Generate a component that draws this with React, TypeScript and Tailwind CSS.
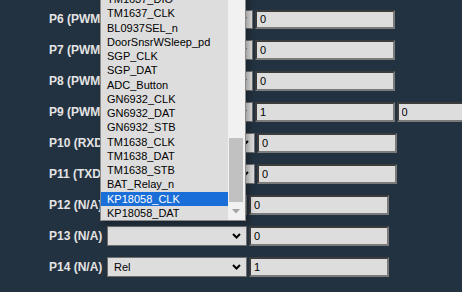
const rows = [
  { label: 'P6 (PWM0)', lw: 'w-[64px]', sel: '', vals: ['0'] },
  { label: 'P7 (PWM1)', lw: 'w-[64px]', sel: '', vals: ['0'] },
  { label: 'P8 (PWM2)', lw: 'w-[64px]', sel: '', vals: ['0'] },
  { label: 'P9 (PWM3)', lw: 'w-[64px]', sel: '', vals: ['1', '0'] },
  { label: 'P10 (RXD1)', lw: 'w-[66px]', sel: '', vals: ['0'] },
  { label: 'P11 (TXD1)', lw: 'w-[66px]', sel: '', vals: ['0'] },
  { label: 'P12 (N/A)', lw: 'w-[58px]', sel: '', vals: ['0'] },
  { label: 'P13 (N/A)', lw: 'w-[58px]', sel: '', vals: ['0'] },
  { label: 'P14 (N/A)', lw: 'w-[58px]', sel: 'Rel', vals: ['1'] },
]

const options = [
  'TM1637_DIO',
  'TM1637_CLK',
  'BL0937SEL_n',
  'DoorSnsrWSleep_pd',
  'SGP_CLK',
  'SGP_DAT',
  'ADC_Button',
  'GN6932_CLK',
  'GN6932_DAT',
  'GN6932_STB',
  'TM1638_CLK',
  'TM1638_DAT',
  'TM1638_STB',
  'BAT_Relay_n',
  'KP18058_CLK',
  'KP18058_DAT',
]

function Chevron() {
  return (
    <svg width="9" height="6" viewBox="0 0 9 6" className="shrink-0">
      <path d="M1 1 L4.5 4.5 L8 1" fill="none" stroke="#000" strokeWidth="2" />
    </svg>
  )
}

export default function App() {
  return (
    <div className="relative w-[462px] h-[292px] overflow-hidden bg-[#233240] font-['Liberation_Sans',Arial,sans-serif]">
      <div className="flex flex-col gap-[11.44px] pt-[9.5px] pl-[49px]">
        {rows.map((r) => (
          <div key={r.label} className="flex items-center h-[19.5px]">
            <span className={`${r.lw} shrink-0 text-[12px] font-bold text-[#e4e4e4] whitespace-nowrap`}>
              {r.label}
            </span>
            <div className="flex items-center justify-between w-[140px] h-full shrink-0 pl-[6px] pr-[5px] bg-[#dddddd] border border-[#6e6e6e] text-[11px] text-black">
              <span>{r.sel}</span>
              <Chevron />
            </div>
            {r.vals.map((v, i) => (
              <input
                key={i}
                readOnly
                value={v}
                className="ml-[2px] w-[139.5px] h-full shrink-0 px-[3px] bg-[#dddddd] border-2 border-t-[#3c3c3c] border-l-[#3c3c3c] border-b-[#7a7a7a] border-r-[#7a7a7a] text-[11px] text-black outline-none"
              />
            ))}
          </div>
        ))}
      </div>

      {/* open dropdown list */}
      <div className="absolute left-[100px] top-[-9px] w-[146px] flex border border-[#8a8a8a] bg-[#dddddd] shadow-[3px_3px_6px_rgba(0,0,0,0.3)]">
        <div className="flex-1 flex flex-col">
          {options.map((o) => (
            <div
              key={o}
              className={`h-[14.25px] leading-[14.25px] pl-[6px] text-[11px] whitespace-nowrap ${
                o === 'KP18058_CLK' ? 'bg-[#1a6ed8] text-white' : 'text-black'
              }`}
            >
              {o}
            </div>
          ))}
        </div>
        <div className="relative w-[17px] bg-[#f1f1f1]">
          <div className="absolute left-[1px] right-[2px] top-[146px] h-[64px] bg-[#c1c1c1]" />
          <svg width="8" height="5" viewBox="0 0 8 5" className="absolute left-[4px] bottom-[6px]">
            <path d="M0 0 L8 0 L4 4.5 Z" fill="#a3a3a3" />
          </svg>
        </div>
      </div>
    </div>
  )
}
